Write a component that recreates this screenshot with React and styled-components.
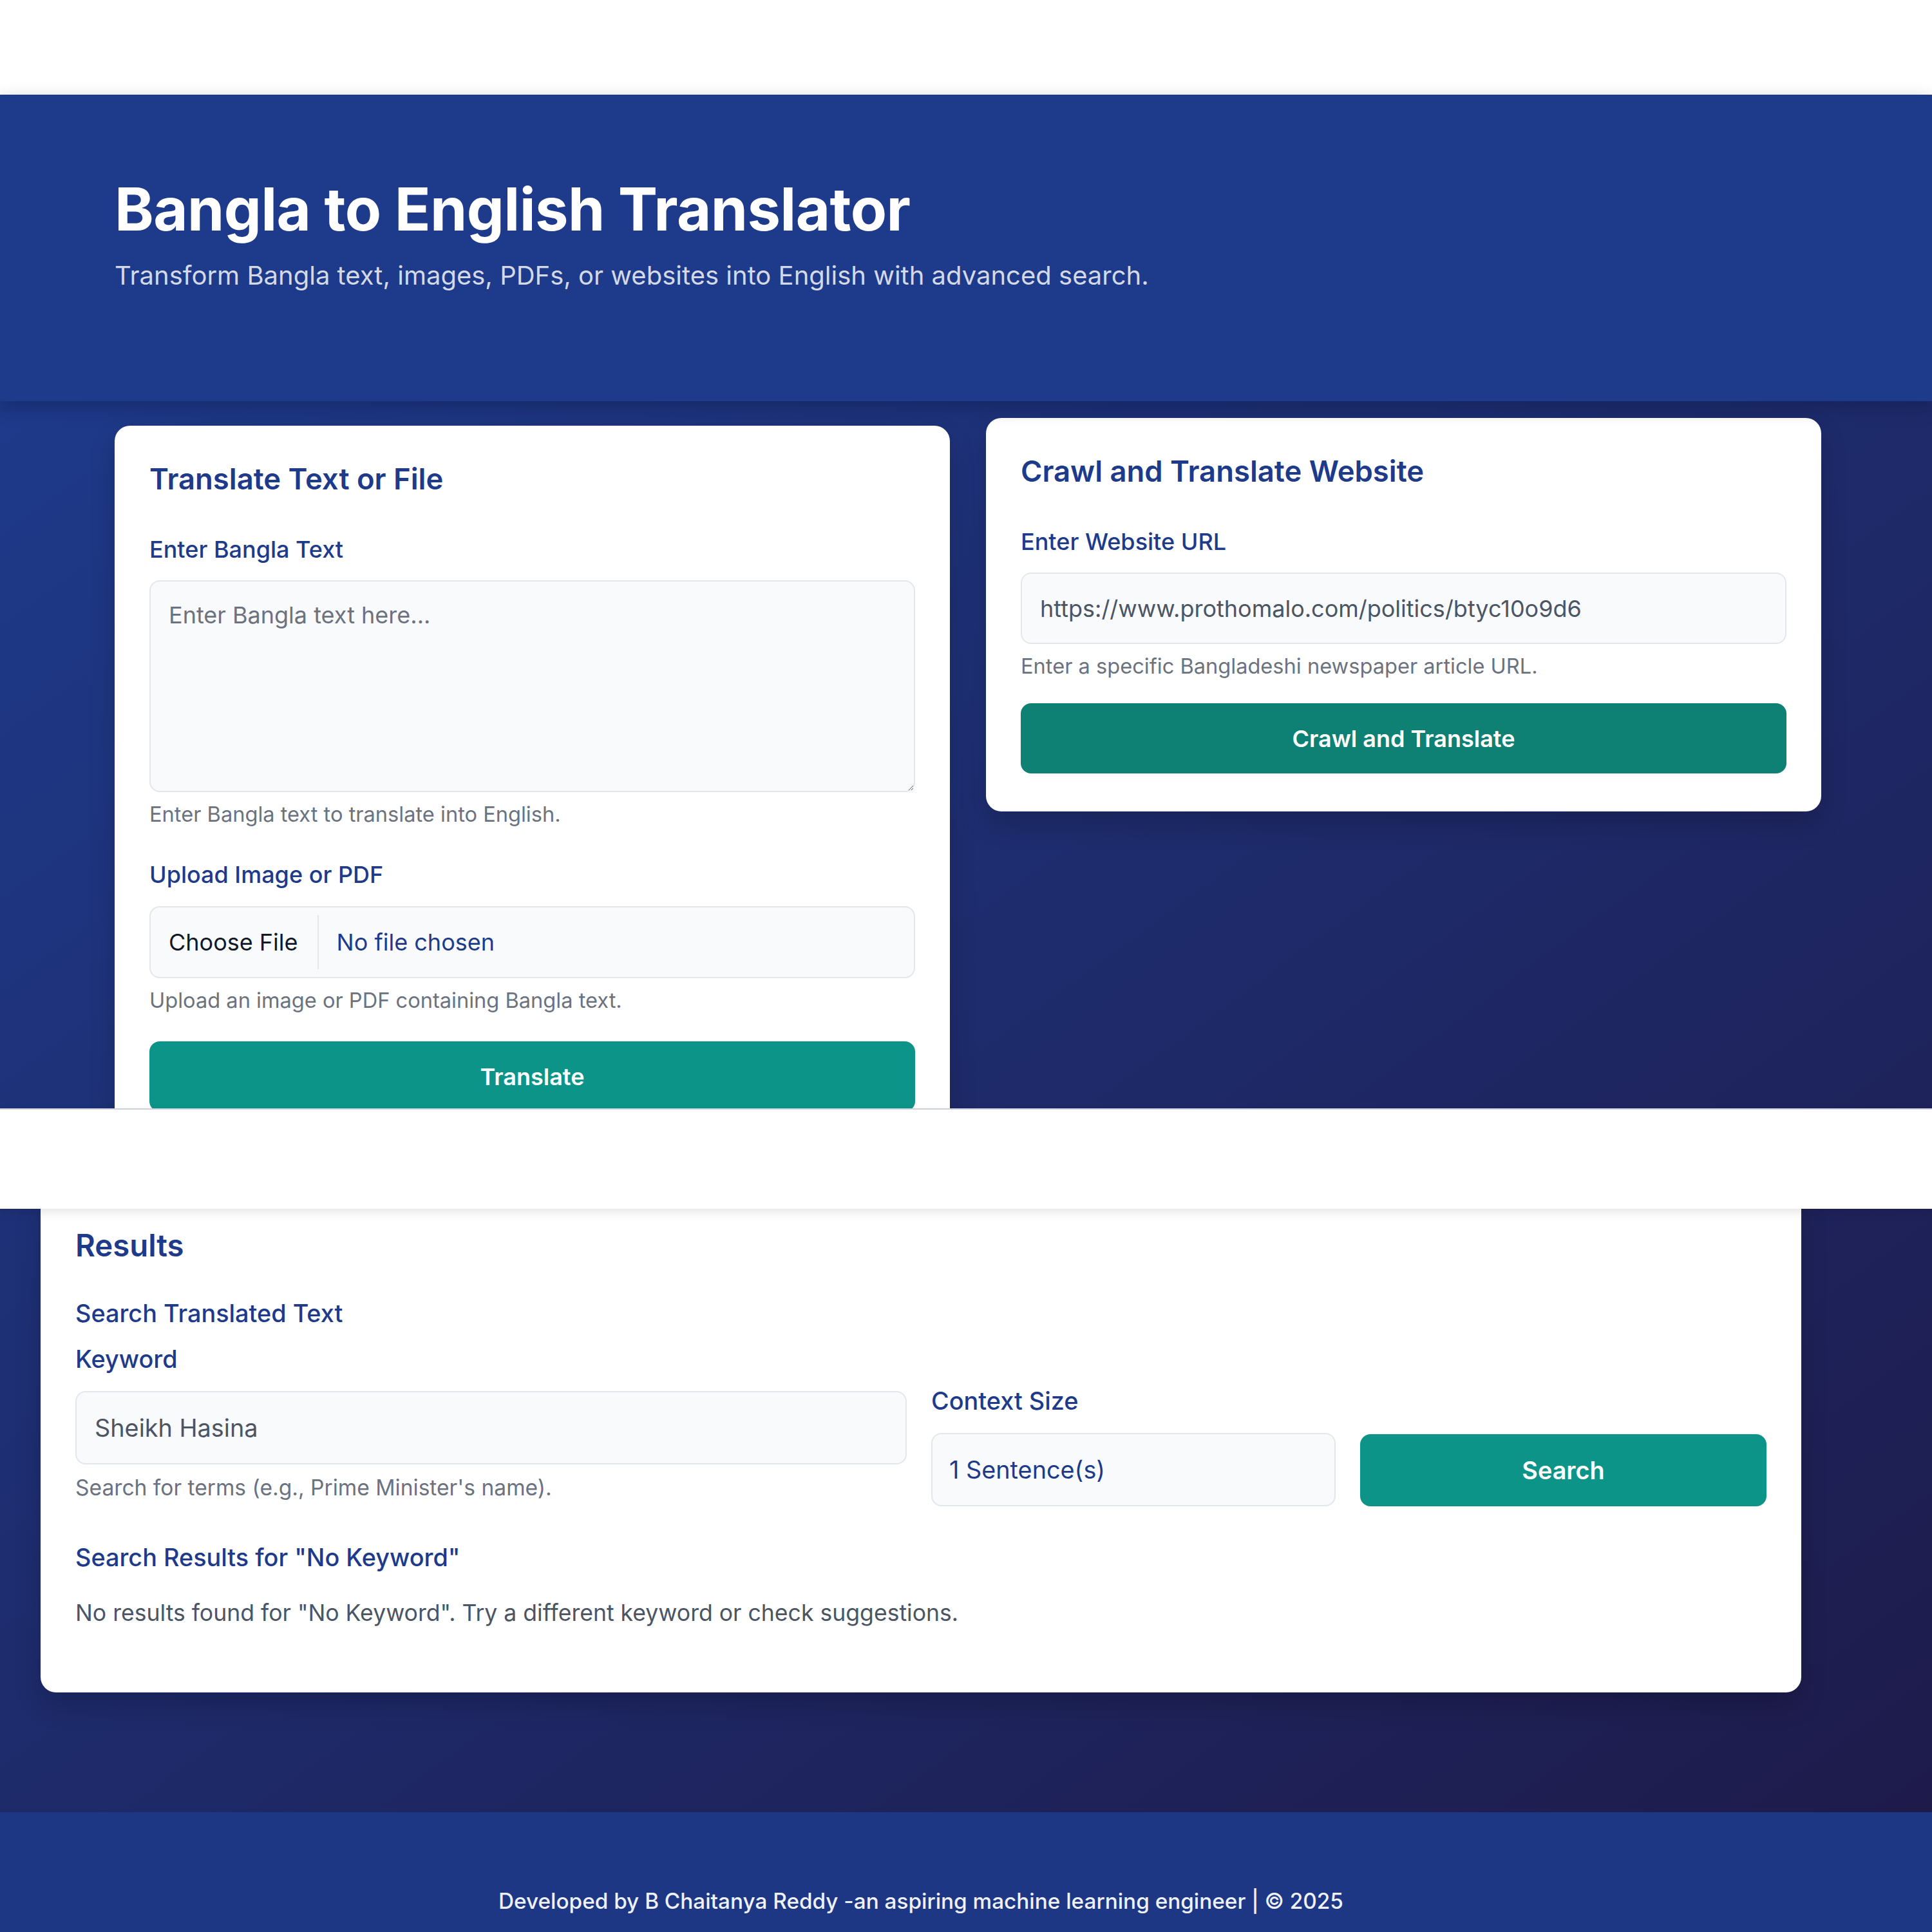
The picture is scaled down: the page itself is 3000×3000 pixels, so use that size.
import React from "react";
import styled, { createGlobalStyle } from "styled-components";

const GlobalStyle = createGlobalStyle`
  * { box-sizing: border-box; }
  html, body { margin: 0; padding: 0; }
  body {
    font-family: Inter, "Noto Sans", "Liberation Sans", sans-serif;
    background: #ffffff;
    -webkit-font-smoothing: antialiased;
  }
`;

const Page = styled.div`
  position: relative;
  min-height: 3000px;
  background: #ffffff;
`;

const NavBar = styled.div`
  height: 147px;
  background: #ffffff;
`;

const Hero = styled.header`
  position: relative;
  z-index: 1;
  background: #1e3a8a;
  padding: 123px 0 167px 178px;
  box-shadow: 0 10px 24px rgba(10, 20, 60, 0.35);
`;

const HeroTitle = styled.h1`
  margin: 0;
  font-size: 92px;
  line-height: 110px;
  font-weight: 700;
  color: #ffffff;
  letter-spacing: -0.6px;
`;

const HeroSubtitle = styled.p`
  margin: 20px 0 0;
  font-size: 40px;
  line-height: 56px;
  font-weight: 400;
  color: #d3d9e6;
`;

const Main = styled.main`
  background: linear-gradient(to bottom right, #1e3a8a, #1e1b4b);
  padding: 38px 0 186px;
`;

const CardsRow = styled.div`
  width: 2650px;
  margin-left: 178px;
  display: grid;
  grid-template-columns: 1fr 1fr;
  gap: 56px;
  align-items: start;
`;

const Card = styled.section`
  background: #ffffff;
  border-radius: 24px;
  padding: 54px 54px 59px;
  box-shadow: 0 20px 40px rgba(0, 0, 0, 0.18);
  transform: translateY(${(p) => (p.$raised ? "-12px" : "0")});
`;

const CardTitle = styled.h2`
  margin: 0 0 ${(p) => p.$mb ?? 58}px;
  font-size: ${(p) => p.$size || 45.4}px;
  line-height: 58px;
  font-weight: 600;
  color: #1e3a8a;
`;

const Field = styled.div`
  display: flex;
  flex-direction: column;
  margin-bottom: ${(p) => p.$mb ?? 0}px;
`;

const Label = styled.label`
  display: block;
  font-size: ${(p) => p.$size || 36}px;
  line-height: 44px;
  font-weight: 500;
  color: #1e3a8a;
  margin-bottom: ${(p) => p.$mb ?? 26}px;
`;

const SubHeading = styled.h3`
  margin: ${(p) => p.$mt ?? 0}px 0 ${(p) => p.$mb ?? 27}px;
  font-size: 37.8px;
  line-height: 44px;
  font-weight: 500;
  color: #1e3a8a;
`;

const TextArea = styled.textarea`
  display: block;
  width: 100%;
  height: 329px;
  padding: 28px 28px 20px;
  font-family: inherit;
  font-size: 36px;
  line-height: 48px;
  color: #374151;
  background: #f9fafb;
  border: 2px solid #e3e6eb;
  border-radius: 16px;
  outline: none;
  resize: vertical;
  &::placeholder { color: #6b7280; }
`;

const TextInput = styled.input`
  display: block;
  width: 100%;
  height: ${(p) => p.$h || 111}px;
  padding: 0 28px;
  font-family: inherit;
  font-size: ${(p) => p.$size || 36}px;
  color: #4b5563;
  background: #f9fafb;
  border: 2px solid #e3e6eb;
  border-radius: 16px;
  outline: none;
`;

const Select = styled.select`
  display: block;
  width: 100%;
  height: 114px;
  padding: 0 26px;
  font-family: inherit;
  font-size: 37.8px;
  color: #1e3a8a;
  background: #f9fafb;
  border: 2px solid #e3e6eb;
  border-radius: 16px;
  appearance: none;
  -webkit-appearance: none;
  outline: none;
`;

const FileBox = styled.label`
  display: flex;
  align-items: stretch;
  height: 112px;
  background: #f9fafb;
  border: 2px solid #e3e6eb;
  border-radius: 16px;
  overflow: hidden;
  cursor: pointer;
  input { display: none; }
`;

const ChooseButton = styled.span`
  display: flex;
  align-items: center;
  margin: 12px 0;
  padding: 0 30px 0 28px;
  border-right: 2px solid #e3e6eb;
  font-size: 36px;
  color: #111827;
`;

const FileName = styled.span`
  display: flex;
  align-items: center;
  padding-left: 28px;
  font-size: 36px;
  color: #1e3a8a;
`;

const Help = styled.p`
  margin: ${(p) => p.$mt ?? 14}px 0 ${(p) => p.$mb ?? 0}px;
  font-size: ${(p) => p.$size || 32.6}px;
  line-height: 40px;
  color: #6b7280;
`;

const Button = styled.button`
  display: block;
  width: 100%;
  height: ${(p) => p.$h || 109}px;
  margin-top: ${(p) => p.$mt ?? 0}px;
  border: none;
  border-radius: 16px;
  background: ${(p) => p.$bg || "#0d9488"};
  color: #ffffff;
  font-family: inherit;
  font-size: ${(p) => p.$size || 36}px;
  font-weight: 600;
  cursor: pointer;
`;

const ResultsCard = styled(Card)`
  width: 2734px;
  margin: 66px 0 0 63px;
  padding-bottom: 54px;
`;

const SearchGrid = styled.div`
  display: grid;
  grid-template-columns: 1291px 628px 1fr;
  gap: 38px;
  align-items: end;
`;

const Column = styled.div`
  display: flex;
  flex-direction: column;
`;

const EmptyText = styled.p`
  margin: 0 0 45px;
  font-size: 35.6px;
  line-height: 48px;
  color: #4b5563;
`;

const Footer = styled.footer`
  background: #1e3785;
  padding: 114px 0 114px;
`;

const FooterInner = styled.div`
  width: 2734px;
  margin-left: 63px;
  text-align: center;
  font-size: 33.3px;
  line-height: 48px;
  font-weight: 500;
  color: #eef1f8;
`;

const Band = styled.div`
  position: absolute;
  top: 1721px;
  left: 0;
  right: 0;
  height: 156px;
  z-index: 5;
  background: #ffffff;
  border-top: 2px solid #cfd2da;
  box-shadow: 0 6px 14px rgba(0, 0, 0, 0.1);
`;

export default function App() {
  return (
    <Page>
      <GlobalStyle />
      <NavBar />
      <Hero>
        <HeroTitle>Bangla to English Translator</HeroTitle>
        <HeroSubtitle>
          Transform Bangla text, images, PDFs, or websites into English with advanced search.
        </HeroSubtitle>
      </Hero>

      <Main>
        <CardsRow>
          <Card>
            <CardTitle>Translate Text or File</CardTitle>
            <Field $mb={52}>
              <Label>Enter Bangla Text</Label>
              <TextArea placeholder="Enter Bangla text here..." />
              <Help>Enter Bangla text to translate into English.</Help>
            </Field>
            <Field>
              <Label $mb={27}>Upload Image or PDF</Label>
              <FileBox>
                <input type="file" accept="image/*,.pdf" />
                <ChooseButton>Choose File</ChooseButton>
                <FileName>No file chosen</FileName>
              </FileBox>
              <Help>Upload an image or PDF containing Bangla text.</Help>
            </Field>
            <Button $mt={44}>Translate</Button>
          </Card>

          <Card $raised>
            <CardTitle>Crawl and Translate Website</CardTitle>
            <Field>
              <Label>Enter Website URL</Label>
              <TextInput defaultValue="https://www.prothomalo.com/politics/btyc10o9d6" />
              <Help>Enter a specific Bangladeshi newspaper article URL.</Help>
            </Field>
            <Button $mt={38} $bg="#0e8174">Crawl and Translate</Button>
          </Card>
        </CardsRow>

        <ResultsCard as="section">
          <CardTitle $mb={54} $size={47.3}>Results</CardTitle>
          <SubHeading>Search Translated Text</SubHeading>
          <SearchGrid>
            <Column>
              <Label $mb={28} $size={37.8}>Keyword</Label>
              <TextInput $h={114} $size={37.8} defaultValue="Sheikh Hasina" />
              <Help $mt={16} $mb={9} $size={33.6}>Search for terms (e.g., Prime Minister's name).</Help>
            </Column>
            <Column>
              <Label $mb={28} $size={37.8}>Context Size</Label>
              <Select defaultValue="1">
                <option value="1">1 Sentence(s)</option>
                <option value="2">2 Sentence(s)</option>
                <option value="3">3 Sentence(s)</option>
              </Select>
            </Column>
            <Button $h={112} $size={37.8}>Search</Button>
          </SearchGrid>
          <SubHeading $mt={57} $mb={41}>Search Results for "No Keyword"</SubHeading>
          <EmptyText>
            No results found for "No Keyword". Try a different keyword or check suggestions.
          </EmptyText>
        </ResultsCard>
      </Main>

      <Footer>
        <FooterInner>
          Developed by B Chaitanya Reddy -an aspiring machine learning engineer | © 2025
        </FooterInner>
      </Footer>

      <Band />
    </Page>
  );
}
